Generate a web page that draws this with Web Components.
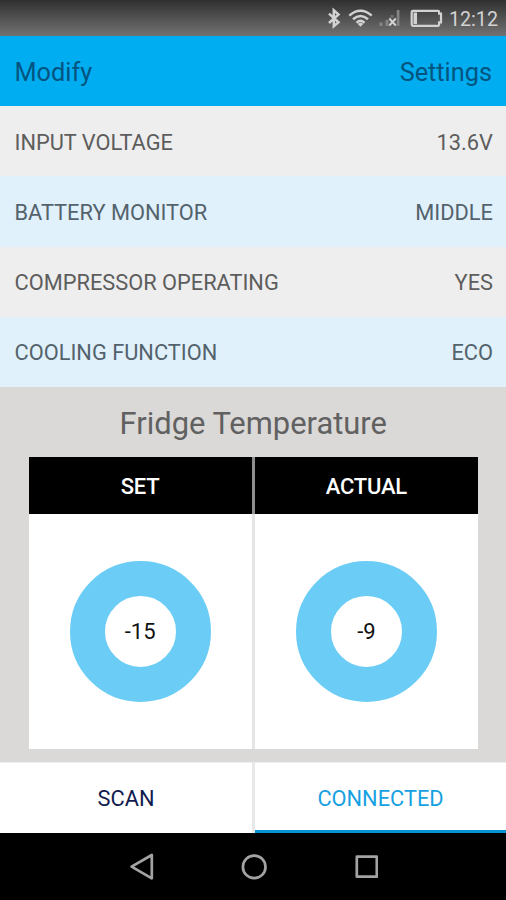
<!DOCTYPE html>
<html lang="en">
<head>
<meta charset="utf-8">
<title>Fridge monitor</title>
<style>
html,body{margin:0;height:900px;overflow:hidden;background:#000}
body{font-family:Roboto,"Liberation Sans",sans-serif;font-weight:400}
</style>
</head>
<body>
<fridge-app></fridge-app>
<script>
const define = (name, html) => {
  const template = document.createElement('template');
  template.innerHTML = html;
  customElements.define(name, class extends HTMLElement {
    constructor() {
      super();
      this.attachShadow({ mode: 'open' }).append(template.content.cloneNode(true));
    }
  });
};

define('status-bar', `<style>
:host{display:flex;height:35.5px;box-sizing:border-box;align-items:center;justify-content:flex-end;padding:2px 8px 0 0;background:linear-gradient(#303030,#727272);color:#d2d2d2;font-size:19.7px;line-height:24px}
svg{display:block;flex:none}
span{padding-top:2px}
</style>
<svg width="122" height="24" viewBox="326.5 7 122 24" fill="none" stroke="#d2d2d2">
<path d="M328.5 13.6 L338 22.2 L333.3 26.2 V10.2 L338 14.4 L328.5 23" stroke-width="2.5"/>
<g stroke-width="2.5"><path d="M348.8 15.6 Q360 6 371.2 15.6"/><path d="M352.5 19.3 Q360 12.6 367.5 19.3"/><path d="M356 22.8 Q360 19 364 22.8"/></g>
<path d="M357.3 23.9 Q360 21.7 362.7 23.9 L360 26.8Z" fill="#d2d2d2" stroke="none"/>
<g fill="#858585" stroke="none"><path d="M379 22.5h3v3.5h-3zM385 20h3v6h-3zM396.3 10h2.6v16h-2.6z"/><path d="M390 15h3v3h-3z" opacity=".6"/></g>
<path d="M388.8 18.5l6.5 7M395.3 18.5l-6.5 7" stroke-width="2"/>
<path d="M412.5 10.8H437.6Q438.6 10.8 438.6 12V13.7H440.5V22.3H438.6V24.6Q438.6 25.8 437.6 25.8H412.5Q411.2 25.8 411.2 24.6V12Q411.2 10.8 412.5 10.8Z" stroke-width="2.2"/>
<path d="M413 12.5h3.5v11.5H413z" fill="#d2d2d2" stroke="none"/>
</svg><span><slot></slot></span>`);

define('app-toolbar', `<style>
:host{display:flex;height:70.5px;box-sizing:border-box;align-items:center;justify-content:space-between;padding:3px 14px 0 14.5px;background:#00adf1;color:#045480;font-size:25.3px}
</style><slot></slot>`);

define('info-row', `<style>
:host{display:flex;height:70.25px;box-sizing:border-box;align-items:center;justify-content:space-between;padding:2px 13px 0 14.5px;background:#eee;color:#5d5d5d;font-size:21.8px}
:host([tinted]){background:#e0f1fc;color:#53626b}
</style><slot></slot>`);

define('temperature-panel', `<style>
:host{display:block;height:375px;box-sizing:border-box;padding:16px 28px 14px 28.5px;background:#dad9d8}
h1{margin:0 0 12px;height:42px;line-height:42px;font-size:30.9px;font-weight:400;color:#616161;text-align:center}
.table{display:grid;grid-template-columns:1fr 1fr;height:291.5px;gap:3px;background:linear-gradient(#8e8e8e 57px,#e4e5e4 57px)}
</style><h1><slot name="title"></slot></h1><div class="table"><slot></slot></div>`);

define('temperature-gauge', `<style>
:host{display:flex;flex-direction:column;background:#fff}
header{height:57px;line-height:59px;background:#000;color:#fff;text-align:center;font-size:22px;font-weight:500;letter-spacing:-.2px}
.body{flex:1;display:grid;place-items:center}
.ring{box-sizing:border-box;width:141px;height:141px;border:35px solid #6bcdf5;border-radius:50%;display:grid;place-items:center;font-size:22px;color:#111}
</style><header><slot name="label"></slot></header><div class="body"><div class="ring"><slot></slot></div></div>`);

define('tab-strip', `<style>
:host{display:grid;grid-template-columns:254px 1fr;height:71.25px;background:#fff}
</style><slot></slot>`);

define('tab-button', `<style>
:host{display:flex;box-sizing:border-box;align-items:center;justify-content:center;border-top:1px solid #efefee;border-right:2px solid #e8e8e8;color:#101a4e;font-size:21.8px}
:host([active]){border-right:0;border-left:1px solid #e8e8e8;color:#17a1e2;background:linear-gradient(#0593d2,#0593d2) bottom/100% 3.5px no-repeat border-box}
</style><slot></slot>`);

define('nav-bar', `<style>
:host{display:flex;height:67px;align-items:center;justify-content:center;background:#000}
svg{display:block}
</style>
<svg width="250" height="30" viewBox="128.2 852 250 30" fill="none" stroke="#a3a3a3" stroke-width="2.7" stroke-linejoin="round">
<path d="M131.8 866.7 L152 855 V878.3 Z"/><circle cx="254.4" cy="866.9" r="11.3"/><rect x="357" y="856.7" width="20" height="20"/>
</svg>`);

define('fridge-app', `<style>
:host{display:flex;flex-direction:column;width:506px;height:900px;overflow:hidden}
:host>*,status-bar,app-toolbar,info-row,temperature-panel,tab-strip,nav-bar{flex:none}
</style>
<status-bar><span>12:12</span></status-bar>
<app-toolbar><span>Modify</span><span>Settings</span></app-toolbar>
<info-row><span>INPUT VOLTAGE</span><span>13.6V</span></info-row>
<info-row tinted><span>BATTERY MONITOR</span><span>MIDDLE</span></info-row>
<info-row><span>COMPRESSOR OPERATING</span><span>YES</span></info-row>
<info-row tinted><span>COOLING FUNCTION</span><span>ECO</span></info-row>
<temperature-panel><span slot="title">Fridge Temperature</span>
<temperature-gauge><span slot="label">SET</span><span>-15</span></temperature-gauge>
<temperature-gauge><span slot="label">ACTUAL</span><span>-9</span></temperature-gauge>
</temperature-panel>
<tab-strip><tab-button><span>SCAN</span></tab-button><tab-button active><span>CONNECTED</span></tab-button></tab-strip>
<nav-bar></nav-bar>`);
</script>
</body>
</html>
